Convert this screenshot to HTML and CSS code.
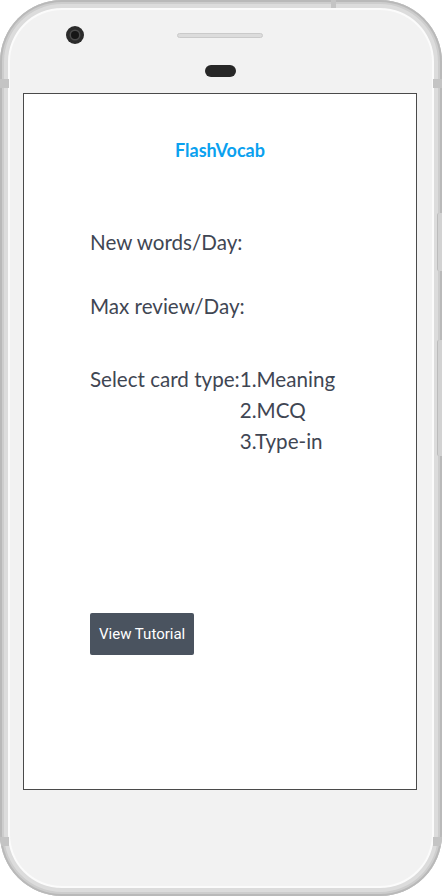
FILE: index.html
```html
<!DOCTYPE html>
<html lang="en">
<head>
<meta charset="utf-8">
<title>FlashVocab</title>
<link rel="stylesheet" href="styles.css">
</head>
<body>
<div class="phone">
  <span class="band band-top"></span>
  <span class="band band-l1"></span>
  <span class="band band-r1"></span>
  <span class="band band-l2"></span>
  <span class="band band-r2"></span>
  <span class="side-btn side-btn-1"></span>
  <span class="side-btn side-btn-2"></span>
  <header class="bezel">
    <div class="bezel-row">
      <span class="camera"><span class="lens"></span></span>
      <span class="speaker"></span>
      <span></span>
    </div>
    <span class="sensor"></span>
  </header>
  <main class="screen">
    <h1 class="title">FlashVocab</h1>
    <div class="settings">
      <p class="label label-new">New words/Day:</p>
      <p class="label label-max">Max review/Day:</p>
      <div class="card-type">
        <span class="label">Select card type:</span>
        <ol class="options">
          <li>1.Meaning</li>
          <li>2.MCQ</li>
          <li>3.Type-in</li>
        </ol>
      </div>
      <button class="tutorial-btn" type="button">View Tutorial</button>
    </div>
  </main>
</div>
</body>
</html>
```
FILE: styles.css
```css
html, body {
  margin: 0;
  padding: 0;
  background: #ffffff;
}

.phone {
  position: relative;
  width: 442px;
  height: 896px;
  box-sizing: border-box;
  padding-left: 23px;
  border-radius: 62px;
  background: #f2f2f2;
  box-shadow:
    inset 0 0 0 2px #b9b9b9,
    inset 0 0 0 4px #cdcdcd,
    inset 0 0 0 8px #dcdcdc,
    inset 0 0 0 10px #fbfbfb;
  overflow: hidden;
}

.band {
  position: absolute;
  background: #c4c4c4;
}
.band-top { left: 331px; top: 0; width: 5px; height: 8px; }
.band-l1 { left: 0; top: 79px; width: 9px; height: 9px; }
.band-r1 { right: 0; top: 79px; width: 9px; height: 9px; }
.band-l2 { left: 0; top: 837px; width: 9px; height: 9px; }
.band-r2 { right: 0; top: 837px; width: 9px; height: 9px; }

.side-btn {
  position: absolute;
  right: 0;
  width: 4px;
  background: #d2d2d2;
  border-left: 1px solid #bcbcbc;
  border-radius: 2px 0 0 2px;
}
.side-btn-1 { top: 213px; height: 58px; }
.side-btn-2 { top: 340px; height: 116px; }

.bezel {
  display: flex;
  flex-direction: column;
  align-items: center;
  width: 394px;
  height: 93px;
  box-sizing: border-box;
  padding-top: 26px;
}

.bezel-row {
  display: grid;
  grid-template-columns: 1fr auto 1fr;
  align-items: center;
  width: 100%;
  height: 18px;
}

.camera {
  justify-self: start;
  margin-left: 43px;
  width: 18px;
  height: 18px;
  border-radius: 50%;
  background: #2b2b2b;
  display: flex;
  align-items: center;
  justify-content: center;
}
.lens {
  width: 8px;
  height: 8px;
  border-radius: 50%;
  background: #161616;
  box-shadow: 0 0 0 1.5px #4a4a4a;
}

.speaker {
  width: 86px;
  height: 5px;
  border-radius: 3px;
  background: #dcdcdc;
  border: 1px solid #cacaca;
  box-sizing: border-box;
}

.sensor {
  margin-top: 21px;
  width: 31px;
  height: 12px;
  border-radius: 6px;
  background: #272727;
}

.screen {
  width: 394px;
  height: 697px;
  box-sizing: border-box;
  border: 1px solid #4a4a4a;
  background: #ffffff;
  font-family: Lato, "Open Sans", sans-serif;
}

.title {
  margin: 45px 0 0;
  font-size: 18px;
  line-height: 22px;
  font-weight: 700;
  color: #0aa1ef;
  text-align: center;
}

.settings {
  display: flex;
  flex-direction: column;
  align-items: flex-start;
  padding-left: 66px;
}

.label {
  margin: 0;
  font-size: 20.6px;
  line-height: 24px;
  color: #3f4653;
}

.label-new { margin-top: 69px; }
.label-max { margin-top: 40px; }

.card-type {
  display: flex;
  margin-top: 49px;
}

.options {
  list-style: none;
  margin: 0;
  padding: 0;
  display: flex;
  flex-direction: column;
  gap: 7px;
  font-size: 20.6px;
  line-height: 24px;
  color: #3f4653;
}

.tutorial-btn {
  margin-top: 160px;
  height: 42px;
  padding: 0 9px;
  border: none;
  border-radius: 2px;
  background: #4a535f;
  color: #ffffff;
  font-family: Roboto, "Noto Sans", sans-serif;
  font-size: 15px;
}
```
